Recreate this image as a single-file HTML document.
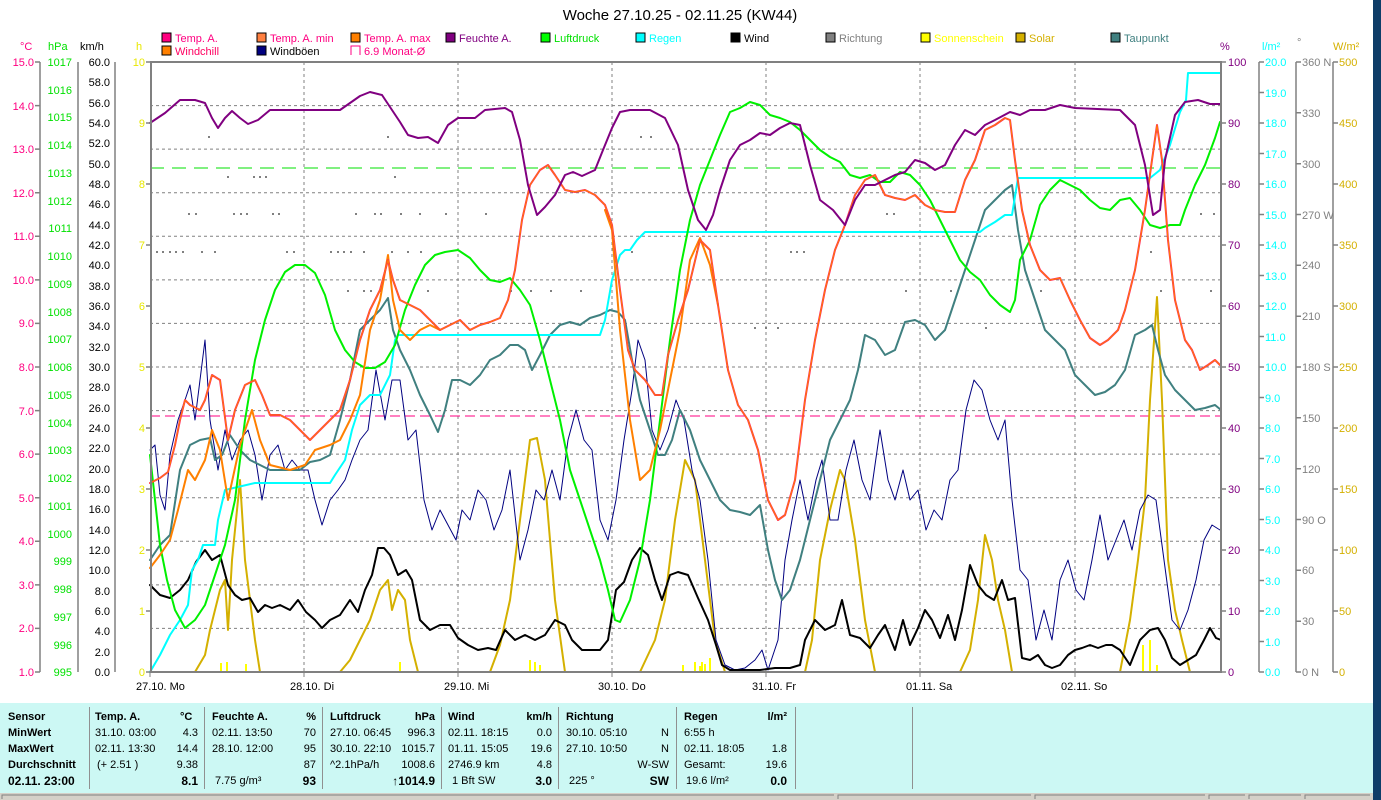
<!DOCTYPE html>
<html><head><meta charset="utf-8"><style>
html,body{margin:0;padding:0;background:#fff;width:1381px;height:800px;overflow:hidden;position:relative}
svg text{font-family:"Liberation Sans",sans-serif;font-size:11px}
.tb{position:absolute;left:0;top:703px;width:1373px;height:90px;background:#ccf8f4;font-family:"Liberation Sans",sans-serif;font-size:11px;color:#000}
.c{position:absolute;top:4px;height:82px;border-left:1px solid #909090}
.t{position:absolute;white-space:nowrap}
.b{font-weight:bold}
</style></head><body>
<svg width="1381" height="800" style="position:absolute;left:0;top:0">
<text x="680" y="20" font-size="15" text-anchor="middle" style="font-size:15px">Woche 27.10.25 - 02.11.25 (KW44)</text>
<g stroke="#000" stroke-width="1">
<rect x="162" y="33" width="9" height="9" fill="#ff0080"/><rect x="257" y="33" width="9" height="9" fill="#ff8040"/><rect x="351" y="33" width="9" height="9" fill="#ff8000"/><rect x="446" y="33" width="9" height="9" fill="#800080"/><rect x="541" y="33" width="9" height="9" fill="#00ff00"/><rect x="636" y="33" width="9" height="9" fill="#00ffff"/><rect x="731" y="33" width="9" height="9" fill="#000"/><rect x="826" y="33" width="9" height="9" fill="#808080"/><rect x="921" y="33" width="9" height="9" fill="#ffff00"/><rect x="1016" y="33" width="9" height="9" fill="#d4b000"/><rect x="1111" y="33" width="9" height="9" fill="#408080"/>
<rect x="162" y="46" width="9" height="9" fill="#ff8000"/><rect x="257" y="46" width="9" height="9" fill="#000080"/>
</g>
<path d="M351 55V46H360V55" fill="none" stroke="#ff0080"/>
<g>
<text x="175" y="42" fill="#ff0080">Temp. A.</text><text x="270" y="42" fill="#ff0080">Temp. A. min</text><text x="364" y="42" fill="#ff0080">Temp. A. max</text><text x="459" y="42" fill="#800080">Feuchte A.</text><text x="554" y="42" fill="#00e000">Luftdruck</text><text x="649" y="42" fill="#00ffff">Regen</text><text x="744" y="42" fill="#000">Wind</text><text x="839" y="42" fill="#808080">Richtung</text><text x="934" y="42" fill="#ffff00">Sonnenschein</text><text x="1029" y="42" fill="#d4b000">Solar</text><text x="1124" y="42" fill="#408080">Taupunkt</text>
<text x="175" y="55" fill="#ff0060">Windchill</text><text x="270" y="55" fill="#000">Windböen</text><text x="364" y="55" fill="#ff0080">6.9 Monat-Ø</text>
</g>
<text x="20" y="50" fill="#ff0080">°C</text><text x="48" y="50" fill="#00e000">hPa</text><text x="80" y="50" fill="#000">km/h</text><text x="136" y="50" fill="#e8e800">h</text>
<text x="1220" y="50" fill="#800080">%</text><text x="1262" y="50" fill="#00ffff">l/m²</text><text x="1297" y="46" fill="#808080">°</text><text x="1333" y="50" fill="#d4b000">W/m²</text>
<g stroke="#808080" stroke-dasharray="3,3" stroke-width="1">
<path d="M150 105.6H1221M150 149.1H1221M150 192.7H1221M150 236.3H1221M150 279.9H1221M150 323.4H1221M150 367H1221M150 410.6H1221M150 454.1H1221M150 497.7H1221M150 541.3H1221M150 584.9H1221M150 628.4H1221"/>
<path d="M304 62V672M458 62V672M612 62V672M766 62V672M920 62V672M1075 62V672"/>
</g>
<path d="M150 168H1221" stroke="#00e000" stroke-dasharray="14,8"/>
<path d="M150 416H1221" stroke="#ff0080" stroke-dasharray="10,5"/>
<g fill="#808080">
<rect x="208" y="136" width="2" height="2"/><rect x="387" y="136" width="2" height="2"/><rect x="640" y="136" width="2" height="2"/><rect x="650" y="136" width="2" height="2"/>
<rect x="227" y="176" width="2" height="2"/><rect x="253" y="176" width="2" height="2"/><rect x="259" y="176" width="2" height="2"/><rect x="265" y="176" width="2" height="2"/><rect x="394" y="176" width="2" height="2"/>
<rect x="188" y="213" width="2" height="2"/><rect x="195" y="213" width="2" height="2"/><rect x="233" y="213" width="2" height="2"/><rect x="240" y="213" width="2" height="2"/><rect x="246" y="213" width="2" height="2"/><rect x="272" y="213" width="2" height="2"/><rect x="278" y="213" width="2" height="2"/><rect x="355" y="213" width="2" height="2"/><rect x="374" y="213" width="2" height="2"/><rect x="380" y="213" width="2" height="2"/><rect x="400" y="213" width="2" height="2"/><rect x="419" y="213" width="2" height="2"/><rect x="445" y="213" width="2" height="2"/><rect x="485" y="213" width="2" height="2"/><rect x="886" y="213" width="2" height="2"/><rect x="893" y="213" width="2" height="2"/><rect x="1200" y="213" width="2" height="2"/><rect x="1213" y="213" width="2" height="2"/>
<rect x="156" y="251" width="2" height="2"/><rect x="162" y="251" width="2" height="2"/><rect x="169" y="251" width="2" height="2"/><rect x="175" y="251" width="2" height="2"/><rect x="182" y="251" width="2" height="2"/><rect x="201" y="251" width="2" height="2"/><rect x="214" y="251" width="2" height="2"/><rect x="286" y="251" width="2" height="2"/><rect x="293" y="251" width="2" height="2"/><rect x="330" y="251" width="2" height="2"/><rect x="337" y="251" width="2" height="2"/><rect x="343" y="251" width="2" height="2"/><rect x="350" y="251" width="2" height="2"/><rect x="363" y="251" width="2" height="2"/><rect x="391" y="251" width="2" height="2"/><rect x="407" y="251" width="2" height="2"/><rect x="420" y="251" width="2" height="2"/><rect x="631" y="251" width="2" height="2"/><rect x="696" y="251" width="2" height="2"/><rect x="790" y="251" width="2" height="2"/><rect x="796" y="251" width="2" height="2"/><rect x="803" y="251" width="2" height="2"/><rect x="1150" y="251" width="2" height="2"/>
<rect x="347" y="290" width="2" height="2"/><rect x="363" y="290" width="2" height="2"/><rect x="370" y="290" width="2" height="2"/><rect x="380" y="290" width="2" height="2"/><rect x="427" y="290" width="2" height="2"/><rect x="510" y="290" width="2" height="2"/><rect x="530" y="290" width="2" height="2"/><rect x="550" y="290" width="2" height="2"/><rect x="580" y="290" width="2" height="2"/><rect x="905" y="290" width="2" height="2"/><rect x="950" y="290" width="2" height="2"/><rect x="1040" y="290" width="2" height="2"/><rect x="1160" y="290" width="2" height="2"/><rect x="1210" y="290" width="2" height="2"/>
<rect x="754" y="327" width="2" height="2"/><rect x="765" y="327" width="2" height="2"/><rect x="777" y="327" width="2" height="2"/><rect x="985" y="327" width="2" height="2"/>
</g>
<g stroke="#ffff00" stroke-width="2">
<path d="M221 672V663M227 672V662M246 672V664M400 672V662M530 672V660M535 672V662M540 672V665M683 672V665M695 672V662M700 672V666M705 672V664M710 672V658M1143 672V645M1150 672V640M1157 672V665M702 672V662"/>
</g>
<g fill="none" stroke-linejoin="round" stroke-linecap="round">
<polyline stroke="#d4b000" stroke-width="2" points="150,672 195,672 205,655 210,630 220,590 225,580 228,630 232,560 240,480 245,560 255,640 260,672 340,672 350,660 360,640 370,620 380,590 388,580 392,610 398,590 405,600 410,640 418,672 490,672 500,645 510,600 520,520 530,440 537,438 545,480 555,600 565,672 640,672 655,640 665,600 675,520 685,460 695,480 705,560 715,640 725,672 805,672 812,640 820,560 830,510 840,470 845,480 855,540 865,620 875,672 960,672 970,650 978,600 985,535 992,560 998,600 1005,630 1012,672 1120,672 1130,620 1138,560 1145,500 1150,400 1157,297 1162,400 1168,560 1175,610 1182,640 1190,672 1221,672"/>
<polyline stroke="#000080" stroke-width="1" points="150,450 155,445 160,495 165,510 170,455 178,420 185,400 190,385 195,420 205,340 210,420 218,470 225,430 232,460 240,440 248,430 255,455 262,500 270,455 278,445 285,470 292,460 300,470 308,470 315,500 322,525 330,500 338,490 345,480 352,460 360,440 368,430 376,370 385,420 392,380 400,380 408,440 416,430 424,500 432,530 440,510 448,525 456,540 462,510 470,520 478,490 486,500 494,530 502,510 510,470 520,560 528,530 536,490 544,500 552,470 560,500 568,440 576,410 584,440 592,450 600,520 608,540 616,500 624,440 632,390 638,340 645,360 652,430 660,450 668,430 676,400 684,420 692,470 700,500 708,560 716,640 725,665 735,670 745,668 755,660 762,650 768,670 778,640 785,560 792,520 800,480 808,520 816,480 822,460 830,520 838,520 846,470 854,440 862,480 870,500 880,430 888,480 895,500 903,470 910,500 918,490 926,530 934,510 942,520 950,480 958,470 966,410 974,380 982,390 990,420 998,440 1005,420 1012,500 1020,570 1028,580 1036,640 1044,610 1052,640 1060,580 1068,560 1076,590 1084,600 1092,560 1100,515 1108,560 1116,540 1124,520 1132,550 1140,510 1148,495 1156,500 1164,560 1172,620 1180,630 1188,610 1196,580 1204,540 1212,525 1220,530"/>
<polyline stroke="#000" stroke-width="2" points="150,585 160,595 170,598 180,590 188,580 196,562 205,550 212,560 220,555 228,585 235,595 242,600 250,598 258,612 265,605 272,608 280,605 290,610 298,600 306,612 315,620 322,628 330,620 340,615 350,600 358,612 365,590 372,575 378,548 384,548 390,555 398,575 406,570 412,580 420,620 430,630 440,625 450,625 458,638 468,645 478,650 488,648 496,650 505,630 515,640 525,635 535,640 545,635 555,620 565,625 572,640 582,650 592,650 600,650 608,640 616,590 624,582 632,560 640,548 648,555 655,580 662,600 670,575 678,572 688,575 698,598 708,620 716,645 722,665 730,670 760,670 775,668 790,668 800,665 805,640 815,620 825,630 835,625 842,600 850,635 860,638 870,648 878,635 885,625 895,650 903,620 910,645 918,628 925,610 932,620 940,638 948,615 955,640 962,610 970,565 978,585 986,595 994,600 1002,580 1008,600 1015,598 1022,658 1030,660 1038,655 1045,665 1052,668 1060,665 1068,655 1075,650 1082,648 1090,645 1098,648 1106,645 1112,645 1120,650 1130,665 1140,640 1150,630 1158,628 1165,640 1172,658 1180,665 1188,660 1196,655 1204,640 1210,628 1216,638 1221,640"/>
<polyline stroke="#408080" stroke-width="2" points="150,560 160,545 170,535 180,470 190,445 200,440 210,438 215,460 222,455 230,435 240,450 250,460 260,465 270,470 300,470 310,462 320,460 330,455 340,420 350,380 360,330 370,320 380,310 388,298 393,330 400,350 410,370 420,395 430,415 438,432 445,410 452,380 460,380 470,385 480,375 490,360 500,355 510,345 518,345 525,350 532,370 540,355 550,335 560,325 570,322 580,325 590,318 600,315 610,310 618,312 625,320 632,360 640,400 650,430 658,455 665,455 672,440 680,410 690,430 700,460 710,480 720,500 730,510 740,512 750,515 760,505 768,550 775,580 782,600 790,590 800,560 810,520 820,480 830,440 840,420 850,400 858,370 865,335 875,340 885,355 895,350 905,322 915,320 925,325 935,340 945,330 955,300 965,270 975,240 985,210 995,200 1005,190 1012,185 1018,230 1025,270 1035,300 1045,330 1055,340 1065,350 1075,375 1085,385 1095,395 1105,392 1115,385 1125,370 1135,335 1145,330 1152,325 1158,350 1165,375 1175,390 1185,400 1195,410 1205,408 1215,405 1221,410"/>
<polyline stroke="#00ffff" stroke-width="2" points="150,672 160,655 170,635 180,620 188,605 192,570 198,560 203,545 215,545 218,520 225,490 255,483 330,483 335,475 345,460 352,430 360,405 370,395 380,395 390,375 395,340 398,335 600,335 605,320 612,280 620,255 625,250 630,250 637,240 645,232 980,232 985,228 995,222 1005,215 1012,215 1018,178 1150,178 1160,170 1170,145 1180,112 1186,100 1188,73 1221,73"/>
<polyline stroke="#00f000" stroke-width="2" points="150,455 155,500 160,545 167,580 175,610 185,628 195,620 205,605 215,575 225,545 235,500 245,420 255,360 265,320 275,290 285,272 295,265 305,265 315,273 325,295 335,330 345,350 355,362 365,368 375,368 385,362 395,345 405,310 415,285 425,265 435,255 445,252 458,250 470,258 480,270 490,280 500,282 510,278 520,290 530,305 540,340 550,380 560,420 570,470 580,500 590,530 600,560 608,590 615,620 620,622 630,600 640,560 650,500 660,420 670,340 680,270 690,220 700,185 710,160 720,135 730,112 740,108 750,102 760,105 770,115 780,118 790,122 800,130 810,140 820,150 830,157 840,162 850,175 860,178 870,175 880,182 890,182 900,172 910,175 920,185 930,200 940,220 950,240 960,260 970,272 980,280 990,295 1000,305 1010,312 1015,300 1020,260 1030,240 1040,205 1050,190 1060,180 1070,185 1080,190 1090,200 1100,208 1110,210 1120,200 1130,198 1140,210 1150,225 1160,228 1170,225 1180,225 1185,210 1195,185 1205,165 1215,138 1220,122"/>
<polyline stroke="#ff8000" stroke-width="2" points="150,568 160,555 170,540 178,510 188,470 195,480 205,460 212,430 220,450 228,500 240,445 252,410 260,440 270,465 290,470 305,465 315,450 330,445 340,440 350,420 360,395 370,330 380,300 388,255 393,300 400,330 410,340 420,330 430,325 440,330"/>
<polyline stroke="#ff8000" stroke-width="2" points="605,210 612,230 620,330 630,420 640,480 650,470 660,430 670,380 680,330 690,260 700,238 710,265 718,305"/>
<polyline stroke="#ff2060" stroke-width="2" points="150,483 160,478 168,472 175,445 180,420 185,400 190,405 200,410 205,400 212,375 220,380 228,440 235,410 245,385 255,380 262,395 270,415 280,415 290,420 300,430 310,440 320,430 330,420 340,410 350,380 360,340 370,310 380,290 388,260 393,280 400,300 410,305 420,310 430,320 440,330 450,325 460,320 470,330 480,325 490,322 500,318 508,300 515,270 522,220 530,185 540,170 548,165 555,175 565,190 575,192 585,190 595,195 605,205 612,225 620,290 628,350 635,370 645,380 655,395 662,395 668,355 678,320 688,290 700,240 710,250 718,305 728,370 738,405 748,420 758,450 768,500 778,520 785,515 795,480 805,400 815,340 825,290 835,250 845,225 855,195 865,180 875,175 885,195 895,198 905,200 915,195 925,205 935,210 945,212 955,212 965,180 975,160 985,130 995,125 1005,118 1010,120 1015,160 1022,210 1030,245 1040,270 1050,280 1060,278 1070,300 1080,320 1090,338 1100,345 1108,340 1118,330 1125,310 1135,270 1145,210 1152,160 1157,125 1162,160 1168,240 1175,300 1185,340 1192,350 1200,370 1208,365 1215,360 1220,365"/>
<polyline stroke="#ff8000" stroke-width="1" points="150,483 160,478 168,472 175,445 180,420 185,400 190,405 200,410 205,400 212,375 220,380 228,440 235,410 245,385 255,380 262,395 270,415 280,415 290,420 300,430 310,440 320,430 330,420 340,410 350,380 360,340 370,310 380,290 388,260 393,280 400,300 410,305 420,310 430,320 440,330 450,325 460,320 470,330 480,325 490,322 500,318 508,300 515,270 522,220 530,185 540,170 548,165 555,175 565,190 575,192 585,190 595,195 605,205 612,225 620,290 628,350 635,370 645,380 655,395 662,395 668,355 678,320 688,290 700,240 710,250 718,305 728,370 738,405 748,420 758,450 768,500 778,520 785,515 795,480 805,400 815,340 825,290 835,250 845,225 855,195 865,180 875,175 885,195 895,198 905,200 915,195 925,205 935,210 945,212 955,212 965,180 975,160 985,130 995,125 1005,118 1010,120 1015,160 1022,210 1030,245 1040,270 1050,280 1060,278 1070,300 1080,320 1090,338 1100,345 1108,340 1118,330 1125,310 1135,270 1145,210 1152,160 1157,125 1162,160 1168,240 1175,300 1185,340 1192,350 1200,370 1208,365 1215,360 1220,365"/>
<polyline stroke="#800080" stroke-width="2" points="150,123 165,113 180,100 195,100 205,103 212,118 218,128 225,118 232,111 240,118 248,124 258,120 270,110 340,110 350,103 360,96 370,92 382,95 392,110 400,122 408,135 418,138 428,137 438,143 448,125 458,118 475,118 485,110 505,108 512,112 520,140 528,185 537,215 545,207 555,195 565,175 573,172 582,176 595,170 603,150 612,128 620,112 630,110 650,110 665,118 678,145 688,190 698,220 706,230 713,215 720,190 730,160 740,145 750,140 760,133 770,135 780,128 790,123 800,125 810,165 820,200 833,210 845,225 855,200 865,185 875,185 885,180 895,175 905,172 915,160 925,163 935,170 945,165 955,145 965,130 975,135 985,125 995,120 1010,112 1020,115 1030,110 1045,110 1060,105 1075,108 1120,110 1135,125 1145,165 1153,215 1160,210 1165,160 1175,115 1185,102 1198,100 1210,104 1220,104"/>
</g>
<rect x="151" y="62" width="1070" height="610" fill="none" stroke="#808080" stroke-width="2"/>
<g stroke="#808080" stroke-width="1.5">
<path d="M40 62V672M78 62V672M115 62V672M1259 62V672M1296 62V672M1333 62V672"/>
<path d="M35 62H40M35 105.6H40M35 149.1H40M35 192.7H40M35 236.3H40M35 279.9H40M35 323.4H40M35 367H40M35 410.6H40M35 454.1H40M35 497.7H40M35 541.3H40M35 584.9H40M35 628.4H40M35 672H40"/>
<path d="M146 62H152M146 123H152M146 184H152M146 245H152M146 306H152M146 367H152M146 428H152M146 489H152M146 550H152M146 611H152M146 672H152"/>
<path d="M1221 62H1226M1221 123H1226M1221 184H1226M1221 245H1226M1221 306H1226M1221 367H1226M1221 428H1226M1221 489H1226M1221 550H1226M1221 611H1226M1221 672H1226"/>
<path d="M1333 62H1338M1333 123H1338M1333 184H1338M1333 245H1338M1333 306H1338M1333 367H1338M1333 428H1338M1333 489H1338M1333 550H1338M1333 611H1338M1333 672H1338"/>
<path d="M1296 62H1301M1296 112.8H1301M1296 163.7H1301M1296 214.5H1301M1296 265.3H1301M1296 316.2H1301M1296 367H1301M1296 417.8H1301M1296 468.7H1301M1296 519.5H1301M1296 570.3H1301M1296 621.2H1301M1296 672H1301"/>
</g>
<g fill="#ff0080" text-anchor="end">
<text x="34" y="66">15.0</text><text x="34" y="110">14.0</text><text x="34" y="153">13.0</text><text x="34" y="197">12.0</text><text x="34" y="240">11.0</text><text x="34" y="284">10.0</text><text x="34" y="327">9.0</text><text x="34" y="371">8.0</text><text x="34" y="415">7.0</text><text x="34" y="458">6.0</text><text x="34" y="502">5.0</text><text x="34" y="545">4.0</text><text x="34" y="589">3.0</text><text x="34" y="632">2.0</text><text x="34" y="676">1.0</text>
</g>
<g fill="#00e000" text-anchor="end">
<text x="72" y="66">1017</text><text x="72" y="94">1016</text><text x="72" y="121">1015</text><text x="72" y="149">1014</text><text x="72" y="177">1013</text><text x="72" y="205">1012</text><text x="72" y="232">1011</text><text x="72" y="260">1010</text><text x="72" y="288">1009</text><text x="72" y="316">1008</text><text x="72" y="343">1007</text><text x="72" y="371">1006</text><text x="72" y="399">1005</text><text x="72" y="427">1004</text><text x="72" y="454">1003</text><text x="72" y="482">1002</text><text x="72" y="510">1001</text><text x="72" y="538">1000</text><text x="72" y="565">999</text><text x="72" y="593">998</text><text x="72" y="621">997</text><text x="72" y="649">996</text><text x="72" y="676">995</text>
</g>
<g fill="#000" text-anchor="end">
<text x="110" y="66">60.0</text><text x="110" y="86">58.0</text><text x="110" y="107">56.0</text><text x="110" y="127">54.0</text><text x="110" y="147">52.0</text><text x="110" y="168">50.0</text><text x="110" y="188">48.0</text><text x="110" y="208">46.0</text><text x="110" y="229">44.0</text><text x="110" y="249">42.0</text><text x="110" y="269">40.0</text><text x="110" y="290">38.0</text><text x="110" y="310">36.0</text><text x="110" y="330">34.0</text><text x="110" y="351">32.0</text><text x="110" y="371">30.0</text><text x="110" y="391">28.0</text><text x="110" y="412">26.0</text><text x="110" y="432">24.0</text><text x="110" y="452">22.0</text><text x="110" y="473">20.0</text><text x="110" y="493">18.0</text><text x="110" y="513">16.0</text><text x="110" y="534">14.0</text><text x="110" y="554">12.0</text><text x="110" y="574">10.0</text><text x="110" y="595">8.0</text><text x="110" y="615">6.0</text><text x="110" y="635">4.0</text><text x="110" y="656">2.0</text><text x="110" y="676">0.0</text>
</g>
<g fill="#e8e800" text-anchor="end">
<text x="145" y="66">10</text><text x="145" y="127">9</text><text x="145" y="188">8</text><text x="145" y="249">7</text><text x="145" y="310">6</text><text x="145" y="371">5</text><text x="145" y="432">4</text><text x="145" y="493">3</text><text x="145" y="554">2</text><text x="145" y="615">1</text><text x="145" y="676">0</text>
</g>
<g fill="#800080">
<text x="1228" y="66">100</text><text x="1228" y="127">90</text><text x="1228" y="188">80</text><text x="1228" y="249">70</text><text x="1228" y="310">60</text><text x="1228" y="371">50</text><text x="1228" y="432">40</text><text x="1228" y="493">30</text><text x="1228" y="554">20</text><text x="1228" y="615">10</text><text x="1228" y="676">0</text>
</g>
<g fill="#00ffff">
<text x="1265" y="66">20.0</text><text x="1265" y="97">19.0</text><text x="1265" y="127">18.0</text><text x="1265" y="158">17.0</text><text x="1265" y="188">16.0</text><text x="1265" y="219">15.0</text><text x="1265" y="249">14.0</text><text x="1265" y="280">13.0</text><text x="1265" y="310">12.0</text><text x="1265" y="341">11.0</text><text x="1265" y="371">10.0</text><text x="1265" y="402">9.0</text><text x="1265" y="432">8.0</text><text x="1265" y="463">7.0</text><text x="1265" y="493">6.0</text><text x="1265" y="524">5.0</text><text x="1265" y="554">4.0</text><text x="1265" y="585">3.0</text><text x="1265" y="615">2.0</text><text x="1265" y="646">1.0</text><text x="1265" y="676">0.0</text>
</g>
<g stroke="#808080" stroke-width="1.5"><path d="M1259 62H1264M1259 92.5H1264M1259 123H1264M1259 153.5H1264M1259 184H1264M1259 214.5H1264M1259 245H1264M1259 275.5H1264M1259 306H1264M1259 336.5H1264M1259 367H1264M1259 397.5H1264M1259 428H1264M1259 458.5H1264M1259 489H1264M1259 519.5H1264M1259 550H1264M1259 580.5H1264M1259 611H1264M1259 641.5H1264M1259 672H1264"/></g>
<g fill="#808080">
<text x="1302" y="66">360 N</text><text x="1302" y="117">330</text><text x="1302" y="168">300</text><text x="1302" y="219">270 W</text><text x="1302" y="269">240</text><text x="1302" y="320">210</text><text x="1302" y="371">180 S</text><text x="1302" y="422">150</text><text x="1302" y="473">120</text><text x="1302" y="524">90 O</text><text x="1302" y="574">60</text><text x="1302" y="625">30</text><text x="1302" y="676">0 N</text>
</g>
<g fill="#d4b000">
<text x="1339" y="66">500</text><text x="1339" y="127">450</text><text x="1339" y="188">400</text><text x="1339" y="249">350</text><text x="1339" y="310">300</text><text x="1339" y="371">250</text><text x="1339" y="432">200</text><text x="1339" y="493">150</text><text x="1339" y="554">100</text><text x="1339" y="615">50</text><text x="1339" y="676">0</text>
</g>
<g stroke="#808080"><path d="M150 672V677M304 672V677M458 672V677M612 672V677M766 672V677M920 672V677M1075 672V677"/></g>
<g fill="#000">
<text x="136" y="690">27.10. Mo</text><text x="290" y="690">28.10. Di</text><text x="444" y="690">29.10. Mi</text><text x="598" y="690">30.10. Do</text><text x="752" y="690">31.10. Fr</text><text x="906" y="690">01.11. Sa</text><text x="1061" y="690">02.11. So</text>
</g>
<rect x="1373" y="0" width="8" height="800" fill="#0e3d68"/>
<rect x="0" y="793" width="1373" height="7" fill="#d4d0c8"/>
<g fill="none" stroke="#808080"><path d="M2 799V795H834M838 799V795H1031M1035 799V795H1205M1209 799V795H1245M1249 799V795H1301M1305 799V795H1370"/></g>
</svg>
<div class="tb">
<div class="c" style="left:89px"></div><div class="c" style="left:204px"></div><div class="c" style="left:322px"></div><div class="c" style="left:441px"></div><div class="c" style="left:558px"></div><div class="c" style="left:676px"></div><div class="c" style="left:795px"></div><div class="c" style="left:912px"></div>
<div class="t b" style="left:8px;top:8px">Sensor</div><div class="t b" style="left:8px;top:24px">MinWert</div><div class="t b" style="left:8px;top:40px">MaxWert</div><div class="t b" style="left:8px;top:56px">Durchschnitt</div><div class="t b" style="left:8px;top:71px;font-size:12px">02.11. 23:00</div>
<div class="t b" style="left:95px;top:8px">Temp. A.</div><div class="t b" style="left:180px;top:8px">°C</div>
<div class="t" style="left:95px;top:24px">31.10. 03:00</div><div class="t" style="right:1175px;top:24px">4.3</div>
<div class="t" style="left:95px;top:40px">02.11. 13:30</div><div class="t" style="right:1175px;top:40px">14.4</div>
<div class="t" style="left:97px;top:56px">(+ 2.51 )</div><div class="t" style="right:1175px;top:56px">9.38</div>
<div class="t b" style="right:1175px;top:71px;font-size:12px">8.1</div>
<div class="t b" style="left:212px;top:8px">Feuchte A.</div><div class="t b" style="right:1057px;top:8px">%</div>
<div class="t" style="left:212px;top:24px">02.11. 13:50</div><div class="t" style="right:1057px;top:24px">70</div>
<div class="t" style="left:212px;top:40px">28.10. 12:00</div><div class="t" style="right:1057px;top:40px">95</div>
<div class="t" style="right:1057px;top:56px">87</div>
<div class="t" style="left:215px;top:72px">7.75 g/m³</div><div class="t b" style="right:1057px;top:71px;font-size:12px">93</div>
<div class="t b" style="left:330px;top:8px">Luftdruck</div><div class="t b" style="right:938px;top:8px">hPa</div>
<div class="t" style="left:330px;top:24px">27.10. 06:45</div><div class="t" style="right:938px;top:24px">996.3</div>
<div class="t" style="left:330px;top:40px">30.10. 22:10</div><div class="t" style="right:938px;top:40px">1015.7</div>
<div class="t" style="left:330px;top:56px">^2.1hPa/h</div><div class="t" style="right:938px;top:56px">1008.6</div>
<div class="t b" style="right:938px;top:71px;font-size:12px">↑1014.9</div>
<div class="t b" style="left:448px;top:8px">Wind</div><div class="t b" style="right:821px;top:8px">km/h</div>
<div class="t" style="left:448px;top:24px">02.11. 18:15</div><div class="t" style="right:821px;top:24px">0.0</div>
<div class="t" style="left:448px;top:40px">01.11. 15:05</div><div class="t" style="right:821px;top:40px">19.6</div>
<div class="t" style="left:448px;top:56px">2746.9 km</div><div class="t" style="right:821px;top:56px">4.8</div>
<div class="t" style="left:452px;top:72px">1 Bft SW</div><div class="t b" style="right:821px;top:71px;font-size:12px">3.0</div>
<div class="t b" style="left:566px;top:8px">Richtung</div>
<div class="t" style="left:566px;top:24px">30.10. 05:10</div><div class="t" style="right:704px;top:24px">N</div>
<div class="t" style="left:566px;top:40px">27.10. 10:50</div><div class="t" style="right:704px;top:40px">N</div>
<div class="t" style="right:704px;top:56px">W-SW</div>
<div class="t" style="left:569px;top:72px">225 °</div><div class="t b" style="right:704px;top:71px;font-size:12px">SW</div>
<div class="t b" style="left:684px;top:8px">Regen</div><div class="t b" style="right:586px;top:8px">l/m²</div>
<div class="t" style="left:684px;top:24px">6:55 h</div>
<div class="t" style="left:684px;top:40px">02.11. 18:05</div><div class="t" style="right:586px;top:40px">1.8</div>
<div class="t" style="left:684px;top:56px">Gesamt:</div><div class="t" style="right:586px;top:56px">19.6</div>
<div class="t" style="left:686px;top:72px">19.6 l/m²</div><div class="t b" style="right:586px;top:71px;font-size:12px">0.0</div>
</div>
</body></html>
